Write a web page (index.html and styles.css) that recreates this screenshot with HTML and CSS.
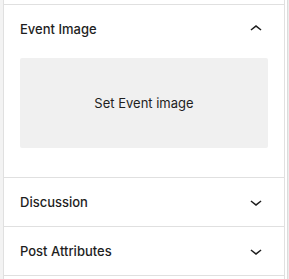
FILE: index.html
```html
<!DOCTYPE html>
<html lang="en">
<head>
<meta charset="UTF-8">
<meta name="viewport" content="width=device-width, initial-scale=1.0">
<title>Event sidebar</title>
<link rel="stylesheet" href="styles.css">
</head>
<body>

  <div class="sidebar">
    <div class="gutter"></div>
    <div class="panel">
      <div class="panel-top"></div>

      <!-- opened panel -->
      <div class="panel-body opened">
        <div class="panel-title">
          <span>Event Image</span>
          <svg class="chevron" viewBox="0 0 24 24" width="24" height="24"><path d="M6.5 12.4L12 8l5.5 4.4-.9 1.2L12 10l-4.6 3.6-.9-1.2z"/></svg>
        </div>
        <div class="image-box">Set Event image</div>
      </div>

      <div class="panel-body">
        <div class="panel-title">
          <span>Discussion</span>
          <svg class="chevron" viewBox="0 0 24 24" width="24" height="24"><path d="M17.5 11.6L12 16l-5.5-4.4.9-1.2L12 14l4.6-3.6.9 1.2z"/></svg>
        </div>
      </div>

      <div class="panel-body">
        <div class="panel-title">
          <span>Post Attributes</span>
          <svg class="chevron" viewBox="0 0 24 24" width="24" height="24"><path d="M17.5 11.6L12 16l-5.5-4.4.9-1.2L12 14l4.6-3.6.9 1.2z"/></svg>
        </div>
      </div>
    </div>
    <div class="scrollbar"></div>
  </div>

</body>
</html>
```
FILE: styles.css
```css
body {
  margin: 0;
  font-family: 'Inter', 'Noto Sans', sans-serif;
  font-size: 13px;
  color: #1e1e1e;
  background-color: #fff;
}

.sidebar {
  display: flex;
  height: 279px;
}

.gutter {
  flex-shrink: 0;
  width: 3px;
  background-color: #f3f3f3;
}

.panel {
  flex-shrink: 0;
  box-sizing: border-box;
  width: 282px;
  border-left: 1px solid #e0e0e0;
  border-right: 1px solid #e0e0e0;
}

.panel-top {
  height: 4px;
  border-bottom: 1px solid #e0e0e0;
}

.panel-body {
  border-bottom: 1px solid #e0e0e0;
}

.panel-body.opened {
  padding-bottom: 29px;
}

.panel-title {
  display: flex;
  justify-content: space-between;
  align-items: center;
  height: 48px;
  padding: 0 16px;
  font-weight: 500;
}

.chevron {
  fill: #1e1e1e;
}

.image-box {
  display: flex;
  justify-content: center;
  align-items: center;
  height: 90px;
  margin: 5px 16px 0 16px;
  background-color: #f0f0f0;
  border-radius: 2px;
}

.scrollbar {
  flex-shrink: 0;
  box-sizing: border-box;
  width: 2px;
  margin-left: 2px;
  background-color: #ececec;
  border-left: 1px solid #dcdcdc;
}
```
